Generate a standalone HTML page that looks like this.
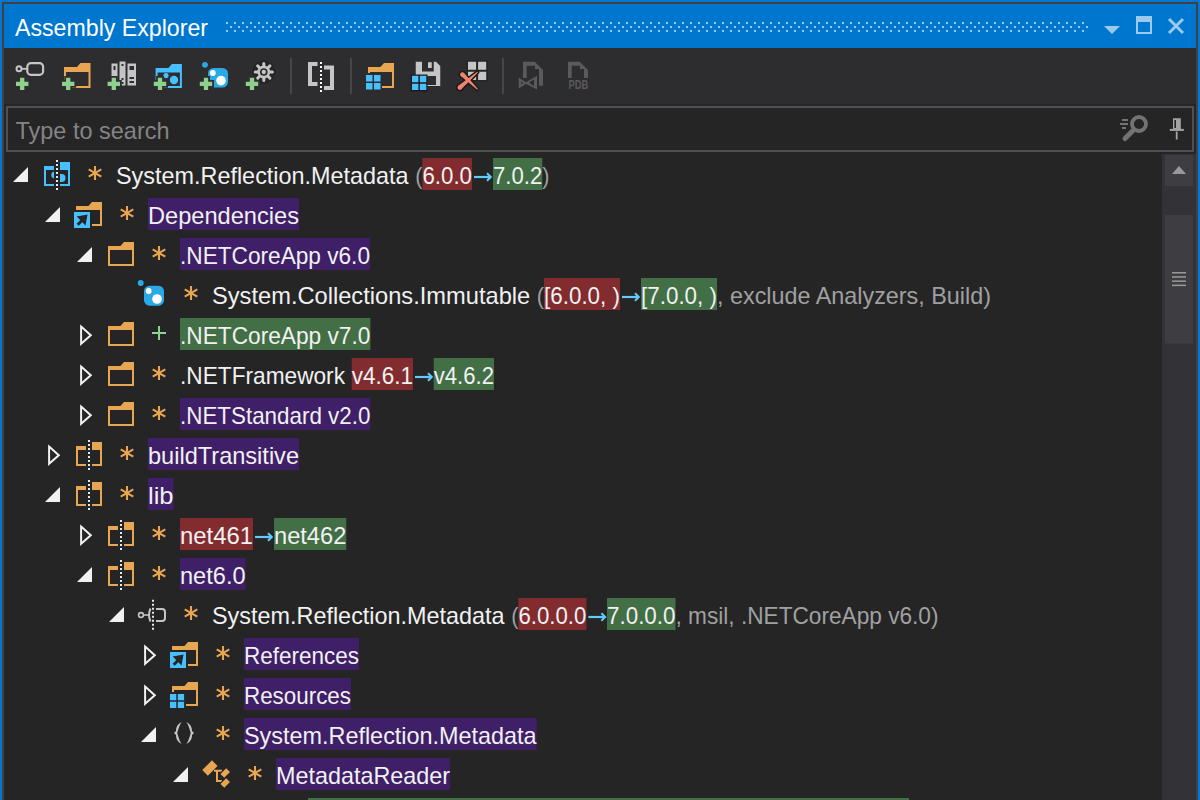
<!DOCTYPE html>
<html><head><meta charset="utf-8"><title>Assembly Explorer</title>
<style>
html,body{margin:0;padding:0;width:1200px;height:800px;overflow:hidden;background:#252526;}
svg{display:block;font-family:"Liberation Sans",sans-serif;}
text{font-family:"Liberation Sans",sans-serif;white-space:pre;}
</style></head>
<body>
<svg width="1200" height="800" viewBox="0 0 1200 800" font-family="Liberation Sans, sans-serif">
<rect x="0" y="0" width="1200" height="800" fill="#0078D4" />
<rect x="2" y="2" width="1196" height="798" fill="#433F44" />
<rect x="4" y="4" width="1192" height="44" fill="#0077CE" />
<rect x="4" y="48" width="1192" height="56" fill="#2D2D30" />
<rect x="4" y="104" width="1192" height="696" fill="#252526" />
<text x="15" y="36" font-size="24" fill="#FFFFFF" textLength="193" lengthAdjust="spacingAndGlyphs">Assembly Explorer</text>
<path d="M226,22h2v2h-2z M226,30h2v2h-2z M234,22h2v2h-2z M234,30h2v2h-2z M242,22h2v2h-2z M242,30h2v2h-2z M250,22h2v2h-2z M250,30h2v2h-2z M258,22h2v2h-2z M258,30h2v2h-2z M266,22h2v2h-2z M266,30h2v2h-2z M274,22h2v2h-2z M274,30h2v2h-2z M282,22h2v2h-2z M282,30h2v2h-2z M290,22h2v2h-2z M290,30h2v2h-2z M298,22h2v2h-2z M298,30h2v2h-2z M306,22h2v2h-2z M306,30h2v2h-2z M314,22h2v2h-2z M314,30h2v2h-2z M322,22h2v2h-2z M322,30h2v2h-2z M330,22h2v2h-2z M330,30h2v2h-2z M338,22h2v2h-2z M338,30h2v2h-2z M346,22h2v2h-2z M346,30h2v2h-2z M354,22h2v2h-2z M354,30h2v2h-2z M362,22h2v2h-2z M362,30h2v2h-2z M370,22h2v2h-2z M370,30h2v2h-2z M378,22h2v2h-2z M378,30h2v2h-2z M386,22h2v2h-2z M386,30h2v2h-2z M394,22h2v2h-2z M394,30h2v2h-2z M402,22h2v2h-2z M402,30h2v2h-2z M410,22h2v2h-2z M410,30h2v2h-2z M418,22h2v2h-2z M418,30h2v2h-2z M426,22h2v2h-2z M426,30h2v2h-2z M434,22h2v2h-2z M434,30h2v2h-2z M442,22h2v2h-2z M442,30h2v2h-2z M450,22h2v2h-2z M450,30h2v2h-2z M458,22h2v2h-2z M458,30h2v2h-2z M466,22h2v2h-2z M466,30h2v2h-2z M474,22h2v2h-2z M474,30h2v2h-2z M482,22h2v2h-2z M482,30h2v2h-2z M490,22h2v2h-2z M490,30h2v2h-2z M498,22h2v2h-2z M498,30h2v2h-2z M506,22h2v2h-2z M506,30h2v2h-2z M514,22h2v2h-2z M514,30h2v2h-2z M522,22h2v2h-2z M522,30h2v2h-2z M530,22h2v2h-2z M530,30h2v2h-2z M538,22h2v2h-2z M538,30h2v2h-2z M546,22h2v2h-2z M546,30h2v2h-2z M554,22h2v2h-2z M554,30h2v2h-2z M562,22h2v2h-2z M562,30h2v2h-2z M570,22h2v2h-2z M570,30h2v2h-2z M578,22h2v2h-2z M578,30h2v2h-2z M586,22h2v2h-2z M586,30h2v2h-2z M594,22h2v2h-2z M594,30h2v2h-2z M602,22h2v2h-2z M602,30h2v2h-2z M610,22h2v2h-2z M610,30h2v2h-2z M618,22h2v2h-2z M618,30h2v2h-2z M626,22h2v2h-2z M626,30h2v2h-2z M634,22h2v2h-2z M634,30h2v2h-2z M642,22h2v2h-2z M642,30h2v2h-2z M650,22h2v2h-2z M650,30h2v2h-2z M658,22h2v2h-2z M658,30h2v2h-2z M666,22h2v2h-2z M666,30h2v2h-2z M674,22h2v2h-2z M674,30h2v2h-2z M682,22h2v2h-2z M682,30h2v2h-2z M690,22h2v2h-2z M690,30h2v2h-2z M698,22h2v2h-2z M698,30h2v2h-2z M706,22h2v2h-2z M706,30h2v2h-2z M714,22h2v2h-2z M714,30h2v2h-2z M722,22h2v2h-2z M722,30h2v2h-2z M730,22h2v2h-2z M730,30h2v2h-2z M738,22h2v2h-2z M738,30h2v2h-2z M746,22h2v2h-2z M746,30h2v2h-2z M754,22h2v2h-2z M754,30h2v2h-2z M762,22h2v2h-2z M762,30h2v2h-2z M770,22h2v2h-2z M770,30h2v2h-2z M778,22h2v2h-2z M778,30h2v2h-2z M786,22h2v2h-2z M786,30h2v2h-2z M794,22h2v2h-2z M794,30h2v2h-2z M802,22h2v2h-2z M802,30h2v2h-2z M810,22h2v2h-2z M810,30h2v2h-2z M818,22h2v2h-2z M818,30h2v2h-2z M826,22h2v2h-2z M826,30h2v2h-2z M834,22h2v2h-2z M834,30h2v2h-2z M842,22h2v2h-2z M842,30h2v2h-2z M850,22h2v2h-2z M850,30h2v2h-2z M858,22h2v2h-2z M858,30h2v2h-2z M866,22h2v2h-2z M866,30h2v2h-2z M874,22h2v2h-2z M874,30h2v2h-2z M882,22h2v2h-2z M882,30h2v2h-2z M890,22h2v2h-2z M890,30h2v2h-2z M898,22h2v2h-2z M898,30h2v2h-2z M906,22h2v2h-2z M906,30h2v2h-2z M914,22h2v2h-2z M914,30h2v2h-2z M922,22h2v2h-2z M922,30h2v2h-2z M930,22h2v2h-2z M930,30h2v2h-2z M938,22h2v2h-2z M938,30h2v2h-2z M946,22h2v2h-2z M946,30h2v2h-2z M954,22h2v2h-2z M954,30h2v2h-2z M962,22h2v2h-2z M962,30h2v2h-2z M970,22h2v2h-2z M970,30h2v2h-2z M978,22h2v2h-2z M978,30h2v2h-2z M986,22h2v2h-2z M986,30h2v2h-2z M994,22h2v2h-2z M994,30h2v2h-2z M1002,22h2v2h-2z M1002,30h2v2h-2z M1010,22h2v2h-2z M1010,30h2v2h-2z M1018,22h2v2h-2z M1018,30h2v2h-2z M1026,22h2v2h-2z M1026,30h2v2h-2z M1034,22h2v2h-2z M1034,30h2v2h-2z M1042,22h2v2h-2z M1042,30h2v2h-2z M1050,22h2v2h-2z M1050,30h2v2h-2z M1058,22h2v2h-2z M1058,30h2v2h-2z M1066,22h2v2h-2z M1066,30h2v2h-2z M1074,22h2v2h-2z M1074,30h2v2h-2z M1082,22h2v2h-2z M1082,30h2v2h-2z M230,26h2v2h-2z M238,26h2v2h-2z M246,26h2v2h-2z M254,26h2v2h-2z M262,26h2v2h-2z M270,26h2v2h-2z M278,26h2v2h-2z M286,26h2v2h-2z M294,26h2v2h-2z M302,26h2v2h-2z M310,26h2v2h-2z M318,26h2v2h-2z M326,26h2v2h-2z M334,26h2v2h-2z M342,26h2v2h-2z M350,26h2v2h-2z M358,26h2v2h-2z M366,26h2v2h-2z M374,26h2v2h-2z M382,26h2v2h-2z M390,26h2v2h-2z M398,26h2v2h-2z M406,26h2v2h-2z M414,26h2v2h-2z M422,26h2v2h-2z M430,26h2v2h-2z M438,26h2v2h-2z M446,26h2v2h-2z M454,26h2v2h-2z M462,26h2v2h-2z M470,26h2v2h-2z M478,26h2v2h-2z M486,26h2v2h-2z M494,26h2v2h-2z M502,26h2v2h-2z M510,26h2v2h-2z M518,26h2v2h-2z M526,26h2v2h-2z M534,26h2v2h-2z M542,26h2v2h-2z M550,26h2v2h-2z M558,26h2v2h-2z M566,26h2v2h-2z M574,26h2v2h-2z M582,26h2v2h-2z M590,26h2v2h-2z M598,26h2v2h-2z M606,26h2v2h-2z M614,26h2v2h-2z M622,26h2v2h-2z M630,26h2v2h-2z M638,26h2v2h-2z M646,26h2v2h-2z M654,26h2v2h-2z M662,26h2v2h-2z M670,26h2v2h-2z M678,26h2v2h-2z M686,26h2v2h-2z M694,26h2v2h-2z M702,26h2v2h-2z M710,26h2v2h-2z M718,26h2v2h-2z M726,26h2v2h-2z M734,26h2v2h-2z M742,26h2v2h-2z M750,26h2v2h-2z M758,26h2v2h-2z M766,26h2v2h-2z M774,26h2v2h-2z M782,26h2v2h-2z M790,26h2v2h-2z M798,26h2v2h-2z M806,26h2v2h-2z M814,26h2v2h-2z M822,26h2v2h-2z M830,26h2v2h-2z M838,26h2v2h-2z M846,26h2v2h-2z M854,26h2v2h-2z M862,26h2v2h-2z M870,26h2v2h-2z M878,26h2v2h-2z M886,26h2v2h-2z M894,26h2v2h-2z M902,26h2v2h-2z M910,26h2v2h-2z M918,26h2v2h-2z M926,26h2v2h-2z M934,26h2v2h-2z M942,26h2v2h-2z M950,26h2v2h-2z M958,26h2v2h-2z M966,26h2v2h-2z M974,26h2v2h-2z M982,26h2v2h-2z M990,26h2v2h-2z M998,26h2v2h-2z M1006,26h2v2h-2z M1014,26h2v2h-2z M1022,26h2v2h-2z M1030,26h2v2h-2z M1038,26h2v2h-2z M1046,26h2v2h-2z M1054,26h2v2h-2z M1062,26h2v2h-2z M1070,26h2v2h-2z M1078,26h2v2h-2z M1086,26h2v2h-2z" fill="#9CC9EE"/>
<path d="M1104,26 L1120,26 L1112,34 Z" fill="#9CC9EE"/>
<path d="M1136,16 h16 v18 h-16 z M1138,22 v10 h12 v-10 z" fill="#9CC9EE" fill-rule="evenodd"/>
<path d="M1169,19 L1183,33 M1183,19 L1169,33" stroke="#9CC9EE" stroke-width="2.9"/>
<circle cx="19" cy="68.8" r="2.5" fill="none" stroke="#C5C5C5" stroke-width="2"/>
<path d="M21.4,68.8 H27" stroke="#C5C5C5" stroke-width="1.8"/>
<rect x="27.3" y="63.1" width="15.8" height="11.8" rx="3.6" fill="none" stroke="#C5C5C5" stroke-width="2.2"/>
<path d="M20.05,77.7 h4.3 v4.050000000000001 h4.050000000000001 v4.3 h-4.050000000000001 v4.050000000000001 h-4.3 v-4.050000000000001 h-4.050000000000001 v-4.3 h4.050000000000001 z" fill="#2D2D30" stroke="#2D2D30" stroke-width="3.6" stroke-linejoin="miter"/>
<path d="M20.05,77.7 h4.3 v4.050000000000001 h4.050000000000001 v4.3 h-4.050000000000001 v4.050000000000001 h-4.3 v-4.050000000000001 h-4.050000000000001 v-4.3 h4.050000000000001 z" fill="#8ED18C"/>
<path d="M76.5,67.5 L80.5,63 H90.5 V67.5 Z" fill="#E8A653"/>
<path d="M64,67 H90.5 V88 H64 Z M66,72 V86 H88.5 V72 Z" fill="#E8A653" fill-rule="evenodd"/>
<path d="M66.05,77.7 h4.3 v4.050000000000001 h4.050000000000001 v4.3 h-4.050000000000001 v4.050000000000001 h-4.3 v-4.050000000000001 h-4.050000000000001 v-4.3 h4.050000000000001 z" fill="#2D2D30" stroke="#2D2D30" stroke-width="3.6" stroke-linejoin="miter"/>
<path d="M66.05,77.7 h4.3 v4.050000000000001 h4.050000000000001 v4.3 h-4.050000000000001 v4.050000000000001 h-4.3 v-4.050000000000001 h-4.050000000000001 v-4.3 h4.050000000000001 z" fill="#8ED18C"/>
<rect x="111.5" y="63.5" width="6" height="22" fill="#C5C5C5"/>
<rect x="119.5" y="61.5" width="6" height="24" fill="#C5C5C5"/>
<rect x="127.5" y="63.5" width="8.5" height="22" fill="#C5C5C5"/>
<path d="M113.5,66h2v4h-2z M121.5,64h2v2h-2z M121.5,78h2v2h-2z M121.5,82h2v2h-2z M129.5,66h4.5v4h-4.5z M129.5,77h4.5v2h-4.5z M129.5,81h4.5v2h-4.5z" fill="#2D2D30"/>
<path d="M111.64999999999999,77.7 h4.3 v4.050000000000001 h4.050000000000001 v4.3 h-4.050000000000001 v4.050000000000001 h-4.3 v-4.050000000000001 h-4.050000000000001 v-4.3 h4.050000000000001 z" fill="#2D2D30" stroke="#2D2D30" stroke-width="3.6" stroke-linejoin="miter"/>
<path d="M111.64999999999999,77.7 h4.3 v4.050000000000001 h4.050000000000001 v4.3 h-4.050000000000001 v4.050000000000001 h-4.3 v-4.050000000000001 h-4.050000000000001 v-4.3 h4.050000000000001 z" fill="#8ED18C"/>
<path d="M167.9,68.5 L171.9,64 H181.9 V68.5 Z" fill="#46C0FF"/>
<path d="M155.6,68 H181.9 V88 H155.6 Z M157.6,72.5 V86 H179.9 V72.5 Z" fill="#46C0FF" fill-rule="evenodd"/>
<circle cx="166" cy="75.6" r="2.6" fill="#46C0FF"/>
<circle cx="174" cy="80" r="4.2" fill="#46C0FF"/>
<path d="M157.85000000000002,77.7 h4.3 v4.050000000000001 h4.050000000000001 v4.3 h-4.050000000000001 v4.050000000000001 h-4.3 v-4.050000000000001 h-4.050000000000001 v-4.3 h4.050000000000001 z" fill="#2D2D30" stroke="#2D2D30" stroke-width="3.6" stroke-linejoin="miter"/>
<path d="M157.85000000000002,77.7 h4.3 v4.050000000000001 h4.050000000000001 v4.3 h-4.050000000000001 v4.050000000000001 h-4.3 v-4.050000000000001 h-4.050000000000001 v-4.3 h4.050000000000001 z" fill="#8ED18C"/>
<circle cx="205" cy="64.8" r="2.9" fill="#2AA9E8"/>
<rect x="208" y="68" width="20" height="19.5" rx="5.5" fill="#2AA9E8"/>
<circle cx="212.8" cy="73" r="2.9" fill="#FFFFFF"/>
<circle cx="221" cy="80.6" r="4.8" fill="#FFFFFF"/>
<path d="M203.85000000000002,77.7 h4.3 v4.050000000000001 h4.050000000000001 v4.3 h-4.050000000000001 v4.050000000000001 h-4.3 v-4.050000000000001 h-4.050000000000001 v-4.3 h4.050000000000001 z" fill="#2D2D30" stroke="#2D2D30" stroke-width="3.6" stroke-linejoin="miter"/>
<path d="M203.85000000000002,77.7 h4.3 v4.050000000000001 h4.050000000000001 v4.3 h-4.050000000000001 v4.050000000000001 h-4.3 v-4.050000000000001 h-4.050000000000001 v-4.3 h4.050000000000001 z" fill="#8ED18C"/>
<circle cx="263.8" cy="72" r="11.5" fill="#252526"/>
<path d="M268.80,72.00 L272.40,72.00 M267.34,75.54 L269.88,78.08 M263.80,77.00 L263.80,80.60 M260.26,75.54 L257.72,78.08 M258.80,72.00 L255.20,72.00 M260.26,68.46 L257.72,65.92 M263.80,67.00 L263.80,63.40 M267.34,68.46 L269.88,65.92" stroke="#C5C5C5" stroke-width="3" stroke-linecap="round"/>
<circle cx="263.8" cy="72" r="6.4" fill="#C5C5C5"/>
<circle cx="263.8" cy="72" r="3" fill="none" stroke="#2D2D30" stroke-width="1.7"/>
<path d="M249.85000000000002,77.7 h4.3 v4.050000000000001 h4.050000000000001 v4.3 h-4.050000000000001 v4.050000000000001 h-4.3 v-4.050000000000001 h-4.050000000000001 v-4.3 h4.050000000000001 z" fill="#2D2D30" stroke="#2D2D30" stroke-width="3.6" stroke-linejoin="miter"/>
<path d="M249.85000000000002,77.7 h4.3 v4.050000000000001 h4.050000000000001 v4.3 h-4.050000000000001 v4.050000000000001 h-4.3 v-4.050000000000001 h-4.050000000000001 v-4.3 h4.050000000000001 z" fill="#8ED18C"/>
<rect x="290" y="58" width="2" height="36" fill="#46464A" />
<rect x="350" y="58" width="2" height="36" fill="#46464A" />
<rect x="502" y="58" width="2" height="36" fill="#46464A" />
<path d="M317.5,62 H308 V86 H317.5 V82 H312 V66 H317.5 Z" fill="#C5C5C5"/>
<path d="M324,65.6 H334 V90 H324 V86 H330 V69.6 H324 Z" fill="#C5C5C5"/>
<path d="M320,62h2v2h-2z M320,66h2v2h-2z M320,70h2v2h-2z M320,74h2v2h-2z M320,78h2v2h-2z M320,82h2v2h-2z M320,86h2v2h-2z M320,90h2v2h-2z" fill="#FFFFFF"/>
<path d="M380,67.5 L384,63 H394 V67.5 Z" fill="#E8A653"/>
<path d="M368,67 H394 V88 H368 Z M370,72 V86 H392 V72 Z" fill="#E8A653" fill-rule="evenodd"/>
<rect x="364" y="73" width="18" height="18" fill="#2D2D30"/>
<path d="M366,75h6.5v6.5h-6.5z M374.0,75h6.5v6.5h-6.5z M366,83.0h6.5v6.5h-6.5z M374.0,83.0h6.5v6.5h-6.5z" fill="#46C0FF"/>
<path d="M415.75,61.75 H436 L440.25,66 V86 H415.75 Z M422,61.75 V71.5 H433.75 V61.75 Z M420,76 V85 H436 V76 Z" fill="#C5C5C5" fill-rule="evenodd"/>
<rect x="428" y="62.25" width="3.75" height="5.75" fill="#C5C5C5"/>
<rect x="410.75" y="74.5" width="16.75" height="17" fill="#1E1A1A"/>
<path d="M412,75.75h6.4v6.4h-6.4z M419.9,75.75h6.4v6.4h-6.4z M412,83.65h6.4v6.4h-6.4z M419.9,83.65h6.4v6.4h-6.4z" fill="#46C0FF"/>
<rect x="466.5" y="60.5" width="21.5" height="21" fill="#252424"/>
<path d="M468,61.75h8.1v8.1h-8.1z M478.1,61.75h8.1v8.1h-8.1z M468,71.85h8.1v8.1h-8.1z M478.1,71.85h8.1v8.1h-8.1z" fill="#C5C5C5"/>
<path d="M460.77,75.98 L477.25,89.66 L477.95,88.94 L463.83,72.82 Z M461.31,89.33 L477.93,72.48 L477.27,71.72 L458.29,85.87 Z" fill="#1E1A1A" stroke="#1E1A1A" stroke-width="3" stroke-linejoin="round"/>
<circle cx="462.3" cy="74.4" r="3.7" fill="#1E1A1A"/><circle cx="459.8" cy="87.6" r="3.8" fill="#1E1A1A"/>
<path d="M460.77,75.98 L477.25,89.66 L477.95,88.94 L463.83,72.82 Z M461.31,89.33 L477.93,72.48 L477.27,71.72 L458.29,85.87 Z" fill="#F0836C"/>
<circle cx="462.3" cy="74.4" r="2.2" fill="#F0836C"/><circle cx="459.8" cy="87.6" r="2.3" fill="#F0836C"/>
<path d="M523,78 V61.7 H534.7 L543,70 V85.7 H539 V69 H535 V65.7 H526.7 V78 Z" fill="#5A5A5A"/>
<path d="M518.7,77.8 L527.3,83 L518.7,88.4 Z M521,81.8 V84.4 L523.2,83 Z" fill="#5A5A5A" fill-rule="evenodd"/>
<path d="M524.6,83 L537,75.8 V89.6 Z M529,82.6 L534,79.5 V86.2 Z" fill="#5A5A5A" fill-rule="evenodd"/>
<path d="M568,78 V61.7 H579.7 L588,70 V78 H584 V69 H580 V65.7 H571.7 V78 Z" fill="#5A5A5A"/>
<text x="568.5" y="89.4" font-size="12.5" font-weight="bold" fill="#5A5A5A" textLength="19.7" lengthAdjust="spacingAndGlyphs">PDB</text>
<rect x="7" y="107" width="1186" height="44" fill="#252526" stroke="#505052" stroke-width="2"/>
<text x="15.5" y="139" font-size="24" fill="#848484" textLength="154" lengthAdjust="spacingAndGlyphs">Type to search</text>
<circle cx="1139" cy="124" r="7" fill="none" stroke="#737373" stroke-width="3.8"/>
<path d="M1132.5,131 L1125,138.5" stroke="#737373" stroke-width="5" stroke-linecap="round"/>
<path d="M1122,120h6 M1120,124h8 M1122,128h4" stroke="#737373" stroke-width="2"/>
<path d="M1173,118.2 h7.8 v10.8 h-7.8 z M1174.4,120 v8 h1.6 v-8 z" fill="#A3A3A3" fill-rule="evenodd"/>
<rect x="1169.8" y="128.9" width="14" height="2" fill="#A3A3A3"/>
<rect x="1175.8" y="131.5" width="1.8" height="8" fill="#A3A3A3"/>
<rect x="1162" y="154" width="34" height="646" fill="#333337" />
<rect x="1165" y="155" width="28" height="31" fill="#3E3E42" />
<path d="M1172,174 L1186,174 L1179,166 Z" fill="#999999"/>
<rect x="1165" y="215" width="28" height="128.5" fill="#3E3E42" />
<rect x="1172" y="272.0" width="14" height="1.5" fill="#999999" />
<rect x="1172" y="276.2" width="14" height="1.5" fill="#999999" />
<rect x="1172" y="280.4" width="14" height="1.5" fill="#999999" />
<rect x="1172" y="284.6" width="14" height="1.5" fill="#999999" />
<path d="M13,182 H28 V167 Z" fill="#F1F1F1"/>
<path d="M44,166 H54 V170 H46 V184 H54 V186 H44 Z" fill="#46C0FF"/>
<path d="M60,162 H70 V186 H60 V184 H68 V170 H60 Z" fill="#46C0FF"/>
<path d="M54,171.5 A3.6,3.6 0 0 0 54,178.5 Z" fill="#46C0FF"/>
<path d="M60,174 H61.5 A4,4 0 0 1 61.5,182 H60 Z" fill="#46C0FF"/>
<path d="M56,160h2v2h-2z M56,164h2v2h-2z M56,168h2v2h-2z M56,172h2v2h-2z M56,176h2v2h-2z M56,180h2v2h-2z M56,184h2v2h-2z M56,188h2v2h-2z" fill="#E8E8E8"/>
<path d="M95,166 V180 M88.7,169.4 L101.3,176.6 M88.7,176.6 L101.3,169.4" stroke="#E8A653" stroke-width="2.1"/>
<text x="116" y="184" font-size="24" fill="#F1F1F1" textLength="292.6" lengthAdjust="spacingAndGlyphs">System.Reflection.Metadata</text>
<text x="415.2" y="184" font-size="24" fill="#A0A0A0" textLength="7.2" lengthAdjust="spacingAndGlyphs">(</text>
<rect x="422.4" y="158" width="49.60000000000002" height="32" fill="#822C30" />
<text x="422.4" y="184" font-size="24" fill="#F1F1F1" textLength="49.6" lengthAdjust="spacingAndGlyphs">6.0.0</text>
<path d="M474,177 H490.5" stroke="#62CCFF" stroke-width="2.2"/>
<path d="M487,173.2 L490.8,177 L487,180.8" fill="none" stroke="#62CCFF" stroke-width="2"/>
<rect x="493" y="158" width="49.299999999999955" height="32" fill="#426F46" />
<text x="493" y="184" font-size="24" fill="#F1F1F1" textLength="49.3" lengthAdjust="spacingAndGlyphs">7.0.2</text>
<text x="542.3" y="184" font-size="24" fill="#A0A0A0" textLength="7.2" lengthAdjust="spacingAndGlyphs">)</text>
<path d="M45,222 H60 V207 Z" fill="#F1F1F1"/>
<path d="M88,206.5 L92,202 H102 V206.5 Z" fill="#E8A653"/>
<path d="M76,206 H102 V226 H76 Z M78,210 V224 H100 V210 Z" fill="#E8A653" fill-rule="evenodd"/>
<rect x="72" y="210" width="20" height="20" fill="#252526" />
<rect x="74" y="212" width="16" height="16" fill="#46C0FF" />
<path d="M77.7,224.8 L83.5,219" stroke="#252526" stroke-width="3"/>
<path d="M76.7,216.4 L87.5,214.4 L85.5,225.4 Z" fill="#252526"/>
<path d="M127,206 V220 M120.7,209.4 L133.3,216.6 M120.7,216.6 L133.3,209.4" stroke="#E8A653" stroke-width="2.1"/>
<rect x="148" y="198" width="151" height="32" fill="#3F1F68" />
<text x="148" y="224" font-size="24" fill="#F1F1F1" textLength="151" lengthAdjust="spacingAndGlyphs">Dependencies</text>
<path d="M77,262 H92 V247 Z" fill="#F1F1F1"/>
<path d="M120,246.5 L124,242 H134 V246.5 Z" fill="#E8A653"/>
<path d="M108,246 H134 V266 H108 Z M110,250 V264 H132 V250 Z" fill="#E8A653" fill-rule="evenodd"/>
<path d="M159,246 V260 M152.7,249.4 L165.3,256.6 M152.7,256.6 L165.3,249.4" stroke="#E8A653" stroke-width="2.1"/>
<rect x="180" y="238" width="190" height="32" fill="#3F1F68" />
<text x="180" y="264" font-size="24" fill="#F1F1F1" textLength="190" lengthAdjust="spacingAndGlyphs">.NETCoreApp v6.0</text>
<circle cx="140.7" cy="283" r="3" fill="#2AA9E8"/>
<rect x="144" y="285.7" width="20" height="20" rx="5.5" fill="#2AA9E8"/>
<circle cx="148.7" cy="291" r="2.9" fill="#FFFFFF"/>
<circle cx="157" cy="299" r="4.8" fill="#FFFFFF"/>
<path d="M191,286 V300 M184.7,289.4 L197.3,296.6 M184.7,296.6 L197.3,289.4" stroke="#E8A653" stroke-width="2.1"/>
<text x="212" y="304" font-size="24" fill="#F1F1F1" textLength="318.2" lengthAdjust="spacingAndGlyphs">System.Collections.Immutable</text>
<text x="536.8" y="304" font-size="24" fill="#A0A0A0" textLength="7.2" lengthAdjust="spacingAndGlyphs">(</text>
<rect x="544" y="278" width="76" height="32" fill="#822C30" />
<text x="544" y="304" font-size="24" fill="#F1F1F1" textLength="76" lengthAdjust="spacingAndGlyphs">[6.0.0, )</text>
<path d="M622,297 H638.5" stroke="#62CCFF" stroke-width="2.2"/>
<path d="M635,293.2 L638.8,297 L635,300.8" fill="none" stroke="#62CCFF" stroke-width="2"/>
<rect x="641" y="278" width="76" height="32" fill="#426F46" />
<text x="641" y="304" font-size="24" fill="#F1F1F1" textLength="76" lengthAdjust="spacingAndGlyphs">[7.0.0, )</text>
<text x="717" y="304" font-size="24" fill="#A0A0A0" textLength="274" lengthAdjust="spacingAndGlyphs">, exclude Analyzers, Build)</text>
<path d="M81.1,326.6 L90.8,335.2 L81.1,343.8 Z" fill="none" stroke="#F1F1F1" stroke-width="2" stroke-linejoin="miter"/>
<path d="M120,326.5 L124,322 H134 V326.5 Z" fill="#E8A653"/>
<path d="M108,326 H134 V346 H108 Z M110,330 V344 H132 V330 Z" fill="#E8A653" fill-rule="evenodd"/>
<path d="M159,326 V340 M152,333 H166" stroke="#8ED18C" stroke-width="2"/>
<rect x="180" y="318" width="190.39999999999998" height="32" fill="#426F46" />
<text x="180" y="344" font-size="24" fill="#F1F1F1" textLength="190.4" lengthAdjust="spacingAndGlyphs">.NETCoreApp v7.0</text>
<path d="M81.1,366.6 L90.8,375.2 L81.1,383.8 Z" fill="none" stroke="#F1F1F1" stroke-width="2" stroke-linejoin="miter"/>
<path d="M120,366.5 L124,362 H134 V366.5 Z" fill="#E8A653"/>
<path d="M108,366 H134 V386 H108 Z M110,370 V384 H132 V370 Z" fill="#E8A653" fill-rule="evenodd"/>
<path d="M159,366 V380 M152.7,369.4 L165.3,376.6 M152.7,376.6 L165.3,369.4" stroke="#E8A653" stroke-width="2.1"/>
<text x="180" y="384" font-size="24" fill="#F1F1F1" textLength="165" lengthAdjust="spacingAndGlyphs">.NETFramework</text>
<rect x="351.7" y="358" width="61.30000000000001" height="32" fill="#822C30" />
<text x="351.7" y="384" font-size="24" fill="#F1F1F1" textLength="61.3" lengthAdjust="spacingAndGlyphs">v4.6.1</text>
<path d="M415,377 H431.5" stroke="#62CCFF" stroke-width="2.2"/>
<path d="M428,373.2 L431.8,377 L428,380.8" fill="none" stroke="#62CCFF" stroke-width="2"/>
<rect x="433.7" y="358" width="60.30000000000001" height="32" fill="#426F46" />
<text x="433.7" y="384" font-size="24" fill="#F1F1F1" textLength="60.3" lengthAdjust="spacingAndGlyphs">v4.6.2</text>
<path d="M81.1,406.6 L90.8,415.2 L81.1,423.8 Z" fill="none" stroke="#F1F1F1" stroke-width="2" stroke-linejoin="miter"/>
<path d="M120,406.5 L124,402 H134 V406.5 Z" fill="#E8A653"/>
<path d="M108,406 H134 V426 H108 Z M110,410 V424 H132 V410 Z" fill="#E8A653" fill-rule="evenodd"/>
<path d="M159,406 V420 M152.7,409.4 L165.3,416.6 M152.7,416.6 L165.3,409.4" stroke="#E8A653" stroke-width="2.1"/>
<rect x="180" y="398" width="190.39999999999998" height="32" fill="#3F1F68" />
<text x="180" y="424" font-size="24" fill="#F1F1F1" textLength="190.4" lengthAdjust="spacingAndGlyphs">.NETStandard v2.0</text>
<path d="M49.099999999999994,446.6 L58.8,455.2 L49.099999999999994,463.8 Z" fill="none" stroke="#F1F1F1" stroke-width="2" stroke-linejoin="miter"/>
<path d="M76,446 H86 V450 H78 V464 H86 V466 H76 Z" fill="#E8A653"/>
<path d="M92,442 H102 V466 H92 V464 H100 V450 H92 Z" fill="#E8A653"/>
<path d="M88,440h2v2h-2z M88,444h2v2h-2z M88,448h2v2h-2z M88,452h2v2h-2z M88,456h2v2h-2z M88,460h2v2h-2z M88,464h2v2h-2z M88,468h2v2h-2z" fill="#E8E8E8"/>
<path d="M127,446 V460 M120.7,449.4 L133.3,456.6 M120.7,456.6 L133.3,449.4" stroke="#E8A653" stroke-width="2.1"/>
<rect x="148" y="438" width="151" height="32" fill="#3F1F68" />
<text x="148" y="464" font-size="24" fill="#F1F1F1" textLength="151" lengthAdjust="spacingAndGlyphs">buildTransitive</text>
<path d="M45,502 H60 V487 Z" fill="#F1F1F1"/>
<path d="M76,486 H86 V490 H78 V504 H86 V506 H76 Z" fill="#E8A653"/>
<path d="M92,482 H102 V506 H92 V504 H100 V490 H92 Z" fill="#E8A653"/>
<path d="M88,480h2v2h-2z M88,484h2v2h-2z M88,488h2v2h-2z M88,492h2v2h-2z M88,496h2v2h-2z M88,500h2v2h-2z M88,504h2v2h-2z M88,508h2v2h-2z" fill="#E8E8E8"/>
<path d="M127,486 V500 M120.7,489.4 L133.3,496.6 M120.7,496.6 L133.3,489.4" stroke="#E8A653" stroke-width="2.1"/>
<rect x="148" y="478" width="25.599999999999994" height="32" fill="#3F1F68" />
<text x="148" y="504" font-size="24" fill="#F1F1F1" textLength="25.6" lengthAdjust="spacingAndGlyphs">lib</text>
<path d="M81.1,526.6 L90.8,535.2 L81.1,543.8 Z" fill="none" stroke="#F1F1F1" stroke-width="2" stroke-linejoin="miter"/>
<path d="M108,526 H118 V530 H110 V544 H118 V546 H108 Z" fill="#E8A653"/>
<path d="M124,522 H134 V546 H124 V544 H132 V530 H124 Z" fill="#E8A653"/>
<path d="M120,520h2v2h-2z M120,524h2v2h-2z M120,528h2v2h-2z M120,532h2v2h-2z M120,536h2v2h-2z M120,540h2v2h-2z M120,544h2v2h-2z M120,548h2v2h-2z" fill="#E8E8E8"/>
<path d="M159,526 V540 M152.7,529.4 L165.3,536.6 M152.7,536.6 L165.3,529.4" stroke="#E8A653" stroke-width="2.1"/>
<rect x="180" y="518" width="73" height="32" fill="#822C30" />
<text x="180" y="544" font-size="24" fill="#F1F1F1" textLength="73" lengthAdjust="spacingAndGlyphs">net461</text>
<path d="M255,537 H271.5" stroke="#62CCFF" stroke-width="2.2"/>
<path d="M268,533.2 L271.8,537 L268,540.8" fill="none" stroke="#62CCFF" stroke-width="2"/>
<rect x="274" y="518" width="72.30000000000001" height="32" fill="#426F46" />
<text x="274" y="544" font-size="24" fill="#F1F1F1" textLength="72.3" lengthAdjust="spacingAndGlyphs">net462</text>
<path d="M77,582 H92 V567 Z" fill="#F1F1F1"/>
<path d="M108,566 H118 V570 H110 V584 H118 V586 H108 Z" fill="#E8A653"/>
<path d="M124,562 H134 V586 H124 V584 H132 V570 H124 Z" fill="#E8A653"/>
<path d="M120,560h2v2h-2z M120,564h2v2h-2z M120,568h2v2h-2z M120,572h2v2h-2z M120,576h2v2h-2z M120,580h2v2h-2z M120,584h2v2h-2z M120,588h2v2h-2z" fill="#E8E8E8"/>
<path d="M159,566 V580 M152.7,569.4 L165.3,576.6 M152.7,576.6 L165.3,569.4" stroke="#E8A653" stroke-width="2.1"/>
<rect x="180" y="558" width="65.6" height="32" fill="#3F1F68" />
<text x="180" y="584" font-size="24" fill="#F1F1F1" textLength="65.6" lengthAdjust="spacingAndGlyphs">net6.0</text>
<path d="M109,622 H124 V607 Z" fill="#F1F1F1"/>
<circle cx="141" cy="615" r="2.4" fill="none" stroke="#C5C5C5" stroke-width="1.6"/>
<path d="M143.4,615 H149" stroke="#C5C5C5" stroke-width="1.6"/>
<path d="M150.5,608.5 Q147.5,615 150.5,621.5" fill="none" stroke="#C5C5C5" stroke-width="2"/>
<path d="M152,599.8h2v2h-2z M152,603.8h2v2h-2z M152,607.8h2v2h-2z M152,611.8h2v2h-2z M152,615.8h2v2h-2z M152,619.8h2v2h-2z M152,623.8h2v2h-2z M152,627.8h2v2h-2z" fill="#E8E8E8"/>
<path d="M156,609 H162 Q165,609 165,612 V618 Q165,621 162,621 H156" fill="none" stroke="#C5C5C5" stroke-width="2"/>
<path d="M191,606 V620 M184.7,609.4 L197.3,616.6 M184.7,616.6 L197.3,609.4" stroke="#E8A653" stroke-width="2.1"/>
<text x="212" y="624" font-size="24" fill="#F1F1F1" textLength="292.6" lengthAdjust="spacingAndGlyphs">System.Reflection.Metadata</text>
<text x="511.2" y="624" font-size="24" fill="#A0A0A0" textLength="7.2" lengthAdjust="spacingAndGlyphs">(</text>
<rect x="518.4" y="598" width="68.0" height="32" fill="#822C30" />
<text x="518.4" y="624" font-size="24" fill="#F1F1F1" textLength="68" lengthAdjust="spacingAndGlyphs">6.0.0.0</text>
<path d="M588.4,617 H604.9" stroke="#62CCFF" stroke-width="2.2"/>
<path d="M601.4,613.2 L605.1999999999999,617 L601.4,620.8" fill="none" stroke="#62CCFF" stroke-width="2"/>
<rect x="607" y="598" width="68.5" height="32" fill="#426F46" />
<text x="607" y="624" font-size="24" fill="#F1F1F1" textLength="68.5" lengthAdjust="spacingAndGlyphs">7.0.0.0</text>
<text x="675.5" y="624" font-size="24" fill="#A0A0A0" textLength="263" lengthAdjust="spacingAndGlyphs">, msil, .NETCoreApp v6.0)</text>
<path d="M145.1,646.6 L154.79999999999998,655.2 L145.1,663.8 Z" fill="none" stroke="#F1F1F1" stroke-width="2" stroke-linejoin="miter"/>
<path d="M184,646.5 L188,642 H198 V646.5 Z" fill="#E8A653"/>
<path d="M172,646 H198 V666 H172 Z M174,650 V664 H196 V650 Z" fill="#E8A653" fill-rule="evenodd"/>
<rect x="168" y="650" width="20" height="20" fill="#252526" />
<rect x="170" y="652" width="16" height="16" fill="#46C0FF" />
<path d="M173.7,664.8 L179.5,659" stroke="#252526" stroke-width="3"/>
<path d="M172.7,656.4 L183.5,654.4 L181.5,665.4 Z" fill="#252526"/>
<path d="M223,646 V660 M216.7,649.4 L229.3,656.6 M216.7,656.6 L229.3,649.4" stroke="#E8A653" stroke-width="2.1"/>
<rect x="244" y="638" width="115" height="32" fill="#3F1F68" />
<text x="244" y="664" font-size="24" fill="#F1F1F1" textLength="115" lengthAdjust="spacingAndGlyphs">References</text>
<path d="M145.1,686.6 L154.79999999999998,695.2 L145.1,703.8 Z" fill="none" stroke="#F1F1F1" stroke-width="2" stroke-linejoin="miter"/>
<path d="M184,686.5 L188,682 H198 V686.5 Z" fill="#E8A653"/>
<path d="M172,686 H198 V706 H172 Z M174,690 V704 H196 V690 Z" fill="#E8A653" fill-rule="evenodd"/>
<rect x="168" y="692" width="18" height="18" fill="#252526" />
<path d="M170,694h6.3v6.3h-6.3z M177.8,694h6.3v6.3h-6.3z M170,701.8h6.3v6.3h-6.3z M177.8,701.8h6.3v6.3h-6.3z" fill="#46C0FF"/>
<path d="M223,686 V700 M216.7,689.4 L229.3,696.6 M216.7,696.6 L229.3,689.4" stroke="#E8A653" stroke-width="2.1"/>
<rect x="244" y="678" width="107" height="32" fill="#3F1F68" />
<text x="244" y="704" font-size="24" fill="#F1F1F1" textLength="107" lengthAdjust="spacingAndGlyphs">Resources</text>
<path d="M141,742 H156 V727 Z" fill="#F1F1F1"/>
<path d="M181.8,722 C178.0,723.5 176.0,727 176.0,731 L174.0,733 L176.0,735 C176.0,739 178.0,742.5 181.8,744 C180.0,742 179.0,739 177.2,733 C179.0,727 180.0,724 181.8,722 Z M186.2,722 C190.0,723.5 192.0,727 192.0,731 L194.0,733 L192.0,735 C192.0,739 190.0,742.5 186.2,744 C188.0,742 189.0,739 190.8,733 C189.0,727 188.0,724 186.2,722 Z" fill="#C5C5C5"/>
<path d="M223,726 V740 M216.7,729.4 L229.3,736.6 M216.7,736.6 L229.3,729.4" stroke="#E8A653" stroke-width="2.1"/>
<rect x="244" y="718" width="292.6" height="32" fill="#3F1F68" />
<text x="244" y="744" font-size="24" fill="#F1F1F1" textLength="292.6" lengthAdjust="spacingAndGlyphs">System.Reflection.Metadata</text>
<path d="M173,782 H188 V767 Z" fill="#F1F1F1"/>
<rect x="203.05" y="764.05" width="13.7" height="7.9" fill="#E8A653" transform="rotate(-45 209.9 768)"/>
<path d="M214,770.8 H222 M217,770 V781 H222" fill="none" stroke="#E8A653" stroke-width="2"/>
<rect x="220.54999999999998" y="769.7" width="9.3" height="6.6" fill="#E8A653" stroke="#252526" stroke-width="1.2" transform="rotate(-45 225.2 773)"/>
<rect x="220.54999999999998" y="779.7" width="9.3" height="6.6" fill="#E8A653" stroke="#252526" stroke-width="1.2" transform="rotate(-45 225.2 783)"/>
<path d="M255,766 V780 M248.7,769.4 L261.3,776.6 M248.7,776.6 L261.3,769.4" stroke="#E8A653" stroke-width="2.1"/>
<rect x="276" y="758" width="174" height="32" fill="#3F1F68" />
<text x="276" y="784" font-size="24" fill="#F1F1F1" textLength="174" lengthAdjust="spacingAndGlyphs">MetadataReader</text>
<rect x="308" y="798" width="601" height="2" fill="#426F46" />
</svg>
</body></html>
